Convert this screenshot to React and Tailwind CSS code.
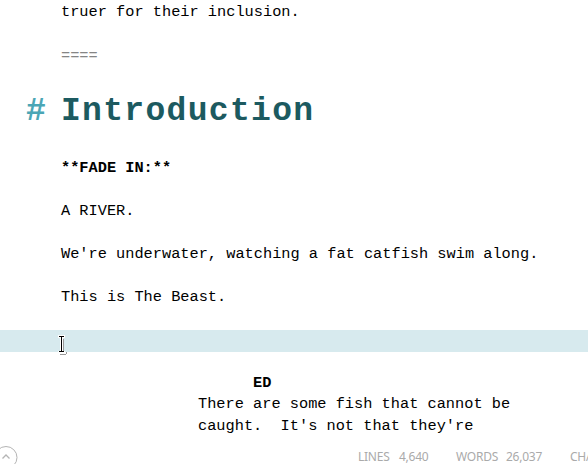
const ROWS = [
  ["truer for their inclusion.", "mt-[2px] h-[21px]"],
  ["", "h-[23px]"],
  ["====", "h-[21px] text-[#858585]"],
];

export default function App() {
  return (
    <div className="flex h-[464px] w-[588px] flex-col overflow-hidden bg-white font-['Liberation_Mono',monospace] text-[15.3px] leading-[21.5px] whitespace-pre text-black">
      <main className="flex h-[440px] shrink-0 flex-col">
        {ROWS.map(([text, style], i) => (
          <p key={i} className={`shrink-0 pl-[61px] ${style}`}>{text}</p>
        ))}
        <h1 className="mt-[25px] flex h-[40px] shrink-0 items-center pl-[26px] text-[33px] font-bold tracking-[1.32px] text-[#1c5a60]">
          <span className="w-[35px] text-[#4ba6b5]">#</span>
          <span>Introduction</span>
        </h1>
        <p className="mt-[26px] h-[43px] shrink-0 pl-[61px] font-bold">**FADE IN:**</p>
        <p className="h-[43px] shrink-0 pl-[61px]">A RIVER.</p>
        <p className="h-[43px] shrink-0 pl-[61px]">We're underwater, watching a fat catfish swim along.</p>
        <p className="h-[43px] shrink-0 pl-[61px]">This is The Beast.</p>
        <div className="h-[22px] shrink-0 bg-[#d7eaee] pt-[5px] pl-[57px]">
          <svg width="12" height="20" viewBox="0 0 12 20" fill="none" shapeRendering="crispEdges">
            <path d="M1 1.5h7M4.5 2v15M1 17.5h7" stroke="#fff" strokeWidth="3" />
            <path d="M3 19.5h6M9.5 17v2M6.5 4v12" stroke="#999" />
            <path d="M2 1.5h5M4.5 2v15M2 16.5h5" stroke="#000" />
          </svg>
        </div>
        <p className="mt-[21px] h-[21px] shrink-0 pl-[253px] font-bold">ED</p>
        <p className="h-[22px] shrink-0 pl-[198px]">There are some fish that cannot be</p>
        <p className="h-[21px] shrink-0 pl-[198px]">caught.  It's not that they're</p>
      </main>
      <footer className="flex h-[24px] shrink-0 items-start font-['Noto_Sans',sans-serif] text-[12px] tracking-[-0.25px] text-[#aaa] [&>span]:shrink-0 [&>span]:pt-[6px]">
        <svg className="shrink-0" width="20" height="24" viewBox="0 0 20 24" fill="none" stroke="#b4b4b4">
          <circle cx="6" cy="17.5" r="11" /><path d="M2.5 18.5l3.5-3.5 3.5 3.5" strokeWidth="1.3" />
        </svg>
        <span className="ml-[338px] w-[41px]">LINES</span><span className="w-[57px]">4,640</span>
        <span className="w-[50px]">WORDS</span><span className="w-[64px]">26,037</span><span>CHA</span>
      </footer>
    </div>
  );
}
